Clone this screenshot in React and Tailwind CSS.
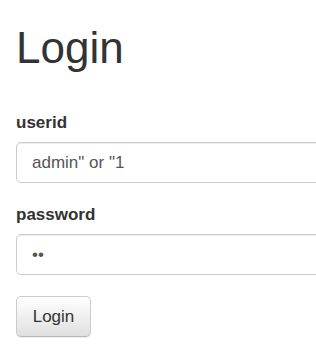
import React from 'react'

const font = { fontFamily: '"Liberation Sans", Arial, sans-serif' }

const Field = ({ label, type, value, className = '' }) => (
  <div className={className}>
    <label className="block text-[17px] leading-[24px] font-bold text-[#333]">{label}</label>
    <input
      type={type}
      defaultValue={value}
      readOnly
      className="mt-[7px] block w-[420px] h-[41px] px-[15px] text-[17px] text-[#555] bg-white border border-[#ccc] rounded-[5px] shadow-[inset_0_1px_1px_rgba(0,0,0,0.075)] outline-none"
    />
  </div>
)

const App = () => {
  return (
    <div className="w-[316px] h-[352px] overflow-hidden bg-white pl-[16px] pt-[24px]" style={font}>
      <h1 className="text-[44px] leading-[48px] text-[#333] font-normal">Login</h1>
      <form className="mt-[39px]">
        <Field label="userid" type="text" value={'admin" or "1'} />
        <Field label="password" type="password" value="ab" className="mt-[20px]" />
        <button
          type="button"
          className="mt-[21px] w-[75px] h-[41px] text-[17px] text-[#333] rounded-[5px] border border-[#ccc] border-b-[#b8b8b8] bg-gradient-to-b from-white to-[#e0e0e0] shadow-[inset_0_1px_0_rgba(255,255,255,0.15),0_1px_1px_rgba(0,0,0,0.075)]"
        >
          Login
        </button>
      </form>
    </div>
  )
}

export default App
